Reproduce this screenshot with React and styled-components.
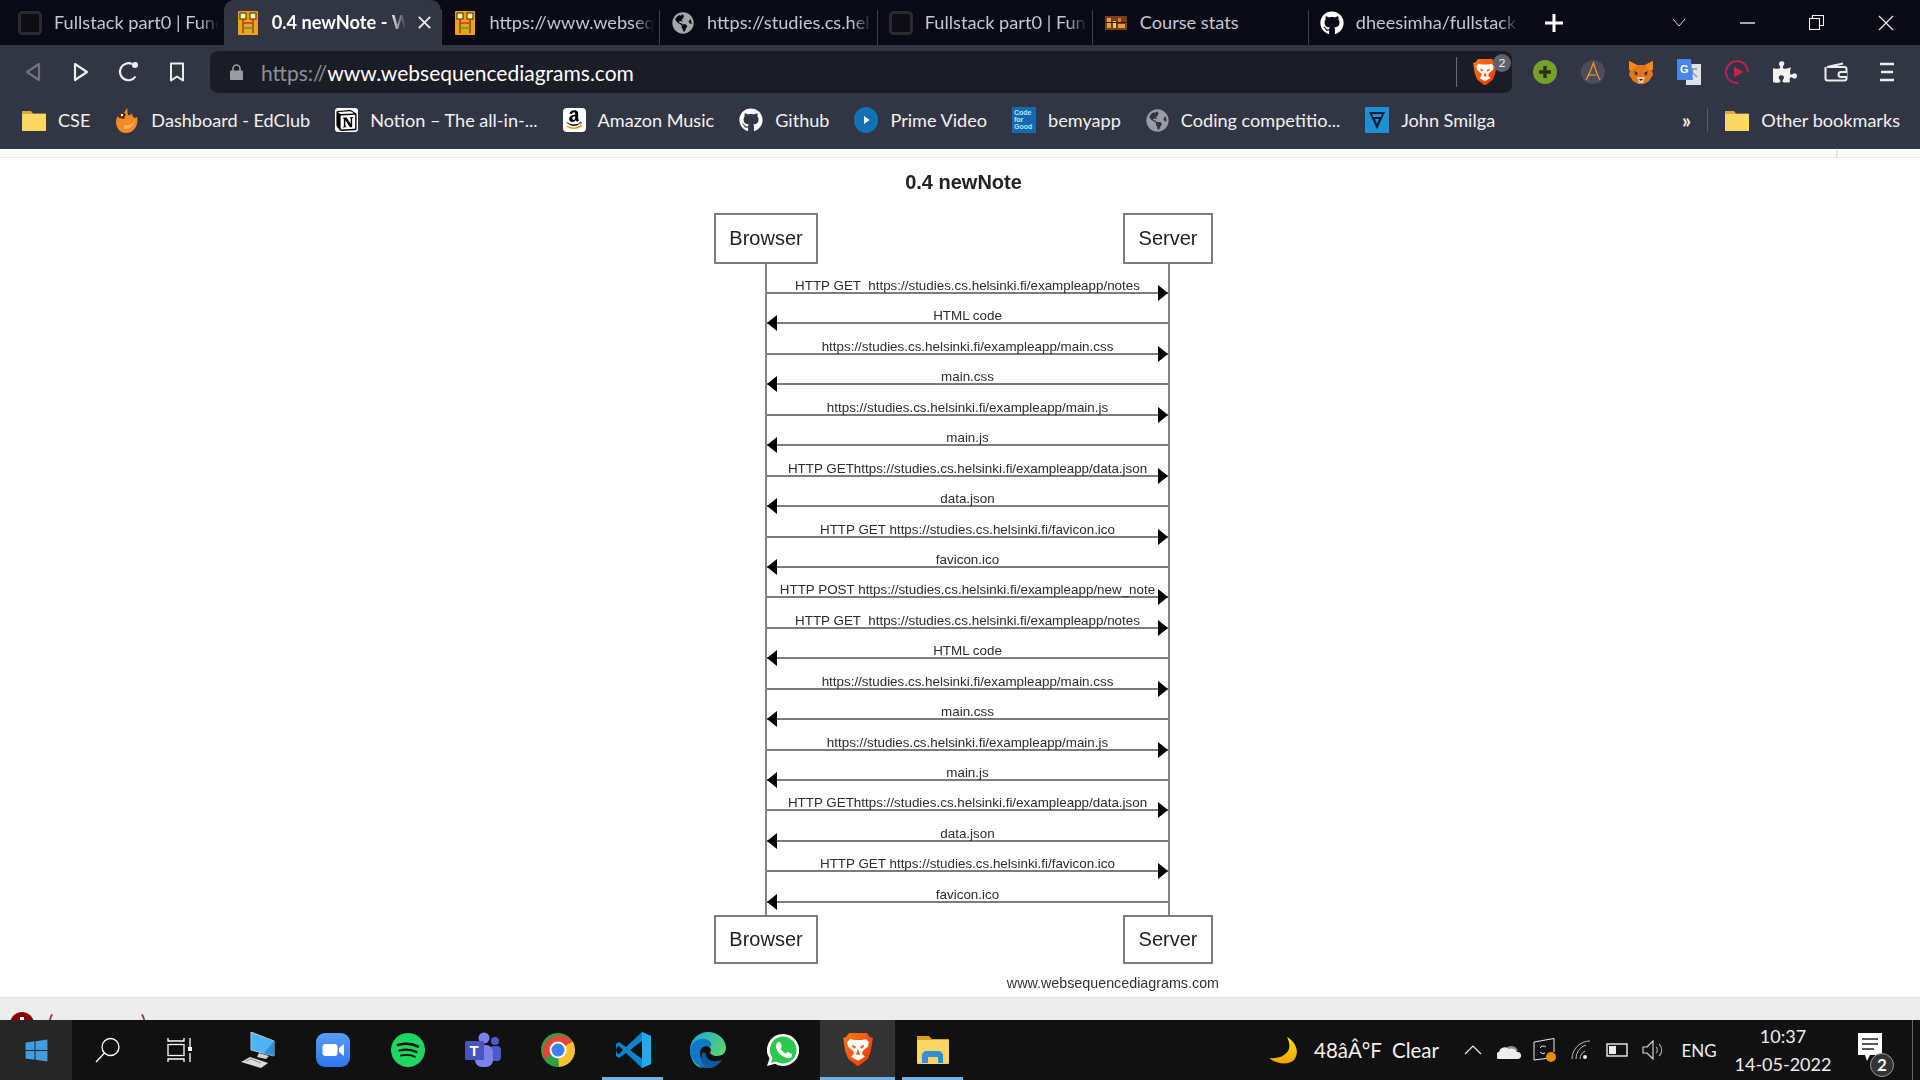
// React
import React from "react";
// Styled Component
import styled, { createGlobalStyle } from "styled-components";
// React Icon
import {
  FaGithub,
  FaGlobeAmericas,
  FaAmazon,
  FaWindows,
  FaPuzzlePiece,
} from "react-icons/fa";
import { SiNotion } from "react-icons/si";

const BASE = "https://studies.cs.helsinki.fi/exampleapp";

// One page load, the second round repeats it after the POST
const pageLoad = (first) => [
  [first, "right"],
  ["HTML code", "left"],
  [`${BASE}/main.css`, "right"],
  ["main.css", "left"],
  [`${BASE}/main.js`, "right"],
  ["main.js", "left"],
  [`HTTP GET${BASE}/data.json`, "right"],
  ["data.json", "left"],
  ["HTTP GET https://studies.cs.helsinki.fi/favicon.ico", "right"],
  ["favicon.ico", "left"],
];

const messages = [
  ...pageLoad(`HTTP GET  ${BASE}/notes`),
  [`HTTP POST ${BASE}/new_note`, "right"],
  ...pageLoad(`HTTP GET  ${BASE}/notes`),
];

// Favicons
const DarkFavicon = () => (
  <svg width="24" height="24" viewBox="0 0 24 24">
    <rect x="1.5" y="1.5" width="21" height="21" rx="3" fill="#0d0d14" stroke="#2b2b2f" strokeWidth="3" />
  </svg>
);

const WsdFavicon = () => (
  <svg width="20" height="24" viewBox="0 0 20 24">
    <rect width="20" height="24" rx="1" fill="#f0a11c" />
    <rect x="2" y="2" width="6" height="6" fill="#fdf0a0" stroke="#3a2a10" />
    <rect x="12" y="2" width="6" height="6" fill="#fdf0a0" stroke="#3a2a10" />
    <path d="M5 8v14M15 8v14" stroke="#7a4a10" strokeWidth="1.4" />
    <path d="M5 12h10" stroke="#d9342b" strokeWidth="1.6" />
    <path d="M5 17h10" stroke="#3fa648" strokeWidth="1.6" />
  </svg>
);

const StatsFavicon = () => (
  <svg width="22" height="14" viewBox="0 0 22 14">
    <rect width="22" height="14" fill="#7a3d16" />
    <rect x="2" y="2" width="4" height="10" fill="#e2a03c" />
    <rect x="8" y="5" width="3" height="7" fill="#f2c25c" />
    <rect x="13" y="2" width="3" height="4" fill="#e2703c" />
    <rect x="13" y="8" width="7" height="4" fill="#e2a03c" />
    <rect x="0" y="6" width="22" height="1" fill="#2b1508" />
  </svg>
);

const Folder = () => (
  <svg width="24" height="24" viewBox="0 0 24 24">
    <path d="M0 3h9l2 2.500h13V23H0z" fill="#d9a93a" />
    <rect y="6" width="24" height="17" rx="1" fill="#fbd863" />
  </svg>
);

const EdClub = () => (
  <svg width="24" height="26" viewBox="0 0 24 26">
    <path d="M1 15C1 10 4 8 7 7l2-1 3-5c1 3 0 5 1 7 2 1 3-1 4-2 0 3 1 4 3 5l2-1c2 8-3 16-11 16C5 26 1 21 1 15z" fill="#f38a24" />
    <path d="M9 22c5 1 10-3 11-9-2 4-6 6-11 5z" fill="#fbb05a" />
    <path d="M2 7l5-2 4 2-2 5-5-1z" fill="#4a3222" />
    <circle cx="7" cy="8" r="1.200" fill="#fff" />
  </svg>
);

const NotionTile = styled.span`
  width: 23px;
  height: 24px;
  background: #fff;
  color: #000;
  display: flex;
  align-items: center;
  justify-content: center;
  border-radius: 3px;
  font-size: 21px;
`;

const AmazonTile = styled(NotionTile)`
  position: relative;
  border-radius: 4px;
  font-size: 18px;
  align-items: flex-start;
  padding-top: 1px;
`;

const AmazonSmile = styled.svg`
  position: absolute;
  left: 4px;
  bottom: 2px;
`;

const Prime = () => (
  <svg width="24" height="26" viewBox="0 0 24 26">
    <ellipse cx="12" cy="13" rx="12" ry="13" fill="#1173b4" />
    <path d="M10 9l5.500 4-5.500 4z" fill="#fff" />
  </svg>
);

const CodeForGood = () => (
  <svg width="24" height="26" viewBox="0 0 24 26">
    <rect width="24" height="26" fill="#0f6cb3" />
    <text x="2" y="8" fontSize="7" fontWeight="700" fill="#bfe0f5" fontFamily="Liberation Sans">Code</text>
    <text x="2" y="15" fontSize="7" fontWeight="700" fill="#bfe0f5" fontFamily="Liberation Sans">for</text>
    <text x="2" y="22" fontSize="7" fontWeight="700" fill="#bfe0f5" fontFamily="Liberation Sans">Good</text>
  </svg>
);

const SmilgaLogo = () => (
  <svg width="24" height="26" viewBox="0 0 24 26">
    <rect width="24" height="26" fill="#1f8fd6" />
    <path d="M4 5h16l-8 17z" fill="#0b1a2b" />
    <path d="M7 7h10l-1 3H8zM10 12h4l-2 5z" fill="#1f8fd6" />
  </svg>
);

// Brave lion, toolbar and taskbar use the same drawing
const BraveLogo = ({ size = 30 }) => (
  <svg width={size} height={size * 1.12} viewBox="0 0 30 34">
    <defs>
      <linearGradient id="braveFill" x1="0" y1="0" x2="1" y2="1">
        <stop offset="0" stopColor="#ff7a1a" />
        <stop offset="1" stopColor="#f52f00" />
      </linearGradient>
    </defs>
    <path d="M6 0h18l3 4 3 1-2 13-3 8-10 8-10-8-3-8L0 5l3-1z" fill="url(#braveFill)" />
    <path d="M7 6l4 1h8l4-1 3 3-1 5-5 4-1 3 3 3-7 4-7-4 3-3-1-3-5-4-1-5z" fill="#fff" />
    <path d="M9 12l4 2-1 2-3-2zM21 12l-4 2 1 2 3-2zM15 16l-2 6h4z" fill="#f25a12" />
  </svg>
);

// Toolbar icons
const BackIcon = ({ dim }) => (
  <svg width="16" height="20" viewBox="0 0 16 20" fill="none" stroke={dim ? "#70737f" : "#eee"} strokeWidth="2.200" strokeLinejoin="round">
    {dim ? <path d="M14 2L2 10l12 8z" /> : <path d="M2 2l12 8-12 8z" />}
  </svg>
);

const ReloadIcon = () => (
  <svg width="22" height="22" viewBox="0 0 22 22" fill="none">
    <path d="M17.500 15.500A8.500 8.500 0 1 1 14 3" stroke="#eee" strokeWidth="2.200" />
    <circle cx="17" cy="4" r="3" fill="#eee" />
  </svg>
);

const BookmarkIcon = () => (
  <svg width="16" height="20" viewBox="0 0 16 20" fill="none" stroke="#eee" strokeWidth="2" strokeLinejoin="round">
    <path d="M2 1.500h12v17l-6-4-6 4z" />
  </svg>
);

const LockIcon = () => (
  <svg width="13" height="16" viewBox="0 0 13 16">
    <path d="M3 7V4.500a3.500 3.500 0 0 1 7 0V7" fill="none" stroke="#9a9ca4" strokeWidth="1.600" />
    <rect y="6.500" width="13" height="9.500" rx="1" fill="#9a9ca4" />
  </svg>
);

const AddonGreen = () => (
  <svg width="24" height="24" viewBox="0 0 24 24">
    <circle cx="12" cy="12" r="12" fill="#76a02b" />
    <path d="M12 6v12M6 12h12" stroke="#26331a" strokeWidth="3.400" />
  </svg>
);

const AddonArc = () => (
  <svg width="24" height="24" viewBox="0 0 24 24" fill="none">
    <circle cx="12" cy="12" r="12" fill="#4a4c59" />
    <path d="M5 20C8 15 11 7 12.500 3 14 8 16 15 19 20" stroke="#f08a24" strokeWidth="1.500" />
    <path d="M7 15h8" stroke="#e8b13c" strokeWidth="1" />
  </svg>
);

const AddonFox = () => (
  <svg width="26" height="24" viewBox="0 0 26 24">
    <path d="M1 1l8 4h8l8-4-1 9 1 5-4 6-5 3h-6l-5-3-4-6 1-5z" fill="#e2761b" />
    <path d="M6 11l4 2-2 3zM20 11l-4 2 2 3z" fill="#3a2a20" />
    <path d="M9 17h8l-2 6h-4z" fill="#e4c8a8" />
    <path d="M11 19h4l-2 2z" fill="#222" />
    <path d="M1 1l8 4-3 5-5 0zM25 1l-8 4 3 5 5 0z" fill="#f6851b" />
  </svg>
);

const AddonTranslate = () => (
  <svg width="24" height="26" viewBox="0 0 24 26">
    <rect x="9" y="5" width="15" height="21" fill="#dfe3e8" />
    <path d="M13 10h7M16 10l-2 8M15 13l5 5" stroke="#8a9199" strokeWidth="1.300" fill="none" />
    <path d="M0 0h14l2 21H0z" fill="#4a86e8" />
    <text x="3" y="14" fontSize="11" fontWeight="700" fill="#fff" fontFamily="Liberation Sans">G</text>
  </svg>
);

const AddonPlay = () => (
  <svg width="24" height="24" viewBox="0 0 24 24" fill="none">
    <path d="M13 23A11 11 0 1 1 23 12" stroke="#d11d4f" strokeWidth="1.800" />
    <path d="M9 6.500L18 12l-9 5.500z" fill="#d11d4f" />
  </svg>
);

const WalletIcon = () => (
  <svg width="24" height="20" viewBox="0 0 24 20" fill="none" stroke="#eee" strokeWidth="2">
    <path d="M3 5l16-3.500M1.500 5v11.500a2 2 0 0 0 2 2h17a2 2 0 0 0 2-2V7a2 2 0 0 0-2-2H4" />
    <path d="M23 10h-6a2 2 0 0 0 0 5h6" fill="#323544" />
  </svg>
);

const MenuIcon = () => (
  <svg width="14" height="20" viewBox="0 0 14 20">
    <path d="M0 2h14M1 10h12M0 18h14" stroke="#eee" strokeWidth="2.400" />
  </svg>
);

// Window controls
const PlusIcon = () => (
  <svg width="18" height="18" viewBox="0 0 18 18">
    <path d="M9 0v18M0 9h18" stroke="#fff" strokeWidth="3" />
  </svg>
);

const ChevronIcon = () => (
  <svg width="14" height="9" viewBox="0 0 14 9" fill="none">
    <path d="M1 1l6 7 6-7" stroke="#ddd" />
  </svg>
);

const MinimizeIcon = () => (
  <svg width="15" height="2" viewBox="0 0 15 2">
    <path d="M0 1h15" stroke="#eee" strokeWidth="1.400" />
  </svg>
);

const RestoreIcon = () => (
  <svg width="15" height="15" viewBox="0 0 15 15" fill="none" stroke="#eee" strokeWidth="1.100">
    <rect x="0.500" y="3.500" width="10" height="11" />
    <path d="M3.500 3.500V0.500h11v10h-4" />
  </svg>
);

const CloseIcon = ({ size = 16, width = 1.200 }) => (
  <svg width={size} height={size} viewBox="0 0 16 16">
    <path d="M1 1l14 14M15 1L1 15" stroke="#eee" strokeWidth={width} />
  </svg>
);

// Taskbar icons
const SearchIcon = () => (
  <svg width="26" height="26" viewBox="0 0 26 26" fill="none" stroke="#fff" strokeWidth="1.300">
    <circle cx="15.500" cy="10" r="8.500" />
    <path d="M9.500 16L1 25" />
  </svg>
);

const TaskViewIcon = () => (
  <svg width="26" height="24" viewBox="0 0 26 24" fill="none" stroke="#fff" strokeWidth="1.300">
    <path d="M1 0v3h16V0M1 24v-3h16v3" />
    <rect x="1" y="6.500" width="16" height="11" />
    <path d="M23 0v9M23 15v9" />
    <rect x="21" y="9" width="4" height="4" fill="#fff" stroke="none" />
  </svg>
);

const ThisPcIcon = () => (
  <svg width="34" height="36" viewBox="0 0 34 36">
    <path d="M10 0l23 9v15L10 18z" fill="#4db4f7" stroke="#b8c4cc" />
    <path d="M33 9v15l-10-3z" fill="#2e8fd6" />
    <path d="M18 21l10 3-3 3-9-2z" fill="#cfd3d6" />
    <path d="M0 30l9-5 18 6-7 5z" fill="#d8dadc" />
    <path d="M5 29l5-2 10 4" stroke="#8a8d90" fill="none" />
  </svg>
);

const ZoomIcon = () => (
  <svg width="34" height="34" viewBox="0 0 34 34">
    <defs>
      <linearGradient id="zoomFill" x1="0" y1="0" x2="0" y2="1">
        <stop offset="0" stopColor="#5a9bfa" />
        <stop offset="1" stopColor="#2d78f0" />
      </linearGradient>
    </defs>
    <rect width="34" height="34" rx="9" fill="url(#zoomFill)" />
    <rect x="6.500" y="11" width="15" height="12" rx="3" fill="#fff" />
    <path d="M23 15l5-4v12l-5-4z" fill="#fff" />
  </svg>
);

const SpotifyIcon = () => (
  <svg width="34" height="34" viewBox="0 0 34 34" fill="none" stroke="#111" strokeLinecap="round">
    <circle cx="17" cy="17" r="17" fill="#1ed760" stroke="none" />
    <path d="M7 12c7-2 14-1.500 20 1.500" strokeWidth="2.600" />
    <path d="M8.500 17.500c6-1.500 12-1 17 1.500" strokeWidth="2.200" />
    <path d="M10 22.500c5-1 10-.8 14 1.200" strokeWidth="1.800" />
  </svg>
);

const TeamsIcon = () => (
  <svg width="36" height="36" viewBox="0 0 36 36">
    <circle cx="30" cy="9" r="4" fill="#5059c9" />
    <rect x="25" y="14" width="11" height="15" rx="4" fill="#5059c9" />
    <circle cx="19" cy="6" r="5.500" fill="#7b83eb" />
    <rect x="10" y="13" width="18" height="22" rx="7" fill="#7b83eb" />
    <rect y="9" width="19" height="19" rx="1.500" fill="#4b53bc" />
    <text x="4.500" y="24" fontSize="15" fontWeight="700" fill="#fff" fontFamily="Liberation Sans">T</text>
  </svg>
);

const ChromeIcon = () => (
  <svg width="34" height="34" viewBox="0 0 34 34">
    <circle cx="17" cy="17" r="17" fill="#2f9e44" />
    <path d="M17 17L3 26A17 17 0 0 1 31.700 8.500z" fill="#e8443a" />
    <path d="M17 17L31.700 8.500A17 17 0 0 1 18 34z" fill="#fbc02d" />
    <circle cx="17" cy="17" r="8.500" fill="#fff" />
    <circle cx="17" cy="17" r="6.500" fill="#3b82e8" />
  </svg>
);

const VsCodeIcon = () => (
  <svg width="36" height="36" viewBox="0 0 36 36">
    <path d="M27 0l9 4v28l-9 4L11 21 4 26l-3-2v-12l3-2 7 5z" fill="#0a84cc" />
    <path d="M27 0l9 4v28l-9 4z" fill="#24a8f0" />
    <path d="M27 9L15 18l12 9z" fill="#111" />
    <path d="M4 14l4 4-4 4-2-1-1-3 1-3z" fill="#111" />
  </svg>
);

const EdgeIcon = () => (
  <svg width="36" height="36" viewBox="0 0 36 36">
    <defs>
      <linearGradient id="edgeTop" x1="0" y1="0" x2="1" y2="0.700">
        <stop offset="0" stopColor="#1aa6dc" />
        <stop offset="1" stopColor="#62d964" />
      </linearGradient>
    </defs>
    <path d="M18 0c10 0 18 7 18 16 0 5-4 8-9 8-4 0-7-2-7-4 2-1 1-6-4-6-8 0-12 7-10 14 1 4 4 7 7 8C6 36 0 28 0 18 0 8 8 0 18 0z" fill="url(#edgeTop)" />
    <path d="M0 18C1 10 8 6 15 7c6 1 8 5 5 8-5-3-11 1-10 8 1 6 7 11 14 12-2 .7-4 1-6 1C8 36 0 28 0 18z" fill="#0f78c8" />
    <path d="M16 22c0 5 5 8 11 7l5-1c-3 5-8 8-14 8-5-1-8-8-6-14 1-2 3-2 4 0z" fill="#0d5aa0" />
  </svg>
);

const WhatsAppIcon = () => (
  <svg width="32" height="32" viewBox="0 0 32 32">
    <path d="M16 0a16 16 0 1 1-8 29.800L0 32l2.500-7.500A16 16 0 0 1 16 0z" fill="#fff" />
    <path d="M16 2.500a13.500 13.500 0 1 1-7 25L4 29l1.500-5A13.500 13.500 0 0 1 16 2.500z" fill="#2cc84d" />
    <path d="M11 8l2 0 2 4.500-1.500 2c1 2 3 4 5 5l2-1.500 4.500 2v2c-1 2-3 2.500-5 2-6-1.500-10-6-11-11 0-2 .5-4 2-5z" fill="#fff" />
  </svg>
);

const ExplorerIcon = () => (
  <svg width="32" height="28" viewBox="0 0 32 28">
    <path d="M0 0h12l3 3h17v24H0z" fill="#d99f1f" />
    <rect y="4" width="32" height="24" rx="1" fill="#fbd568" />
    <path d="M5 27V18l3-3h15l3 3v9h-5v-6H11v6z" fill="#2f8fd8" />
  </svg>
);

// Tray icons
const MoonIcon = () => (
  <svg width="29" height="27" viewBox="0 0 29 27">
    <defs>
      <linearGradient id="moonFill" x1="0" y1="0" x2="0" y2="1">
        <stop offset="0" stopColor="#ffe11a" />
        <stop offset="1" stopColor="#f0a400" />
      </linearGradient>
    </defs>
    <path d="M18 0c9 5 13 15 7 23-5 5-16 5-25-2 9 1 17-2 20-9 1-4 0-8-2-12z" fill="url(#moonFill)" />
  </svg>
);

const CaretIcon = () => (
  <svg width="18" height="10" viewBox="0 0 18 10" fill="none">
    <path d="M1 9l8-8 8 8" stroke="#eee" strokeWidth="1.200" />
  </svg>
);

const CloudIcon = () => (
  <svg width="24" height="17" viewBox="0 0 24 17">
    <path d="M8 8a7 7 0 0 1 13 1z" fill="#8d8d8d" />
    <path d="M3 17a3 3 0 0 1-1-7 6 6 0 0 1 10-3 6 6 0 0 1 8 3 3.500 3.500 0 0 1 1 7z" fill="#eee" />
  </svg>
);

const SyncIcon = () => (
  <svg width="24" height="24" viewBox="0 0 24 24" fill="none" stroke="#eee">
    <path d="M1 4v18l16-2M1 4l20-3.500V14" />
    <path d="M7 10a4 4 0 0 1 6-1M12 15a4 4 0 0 1-5-1" />
    <circle cx="18" cy="19" r="5" fill="#f08a00" stroke="none" />
  </svg>
);

const WifiIcon = () => (
  <svg width="20" height="20" viewBox="0 0 20 20" fill="none" stroke="#bbb">
    <path d="M1 19A18 18 0 0 1 19 1M5 19A14 14 0 0 1 15 5M9 19a10 10 0 0 1 5-8" />
    <circle cx="14" cy="17" r="2" fill="#eee" stroke="none" />
  </svg>
);

const BatteryIcon = () => (
  <svg width="22" height="14" viewBox="0 0 22 14">
    <rect x="1" y="1" width="20" height="12" fill="none" stroke="#eee" strokeWidth="1.400" />
    <rect x="3" y="3" width="7" height="8" fill="#eee" />
  </svg>
);

const VolumeIcon = () => (
  <svg width="22" height="20" viewBox="0 0 22 20" fill="none" stroke="#ddd" strokeWidth="1.100">
    <path d="M1 7h4l6-6v18l-6-6H1z" />
    <path d="M14 7a4 4 0 0 1 0 6M17 4a8 8 0 0 1 0 12" stroke="#aaa" />
  </svg>
);

const NoteIcon = () => (
  <svg width="24" height="28" viewBox="0 0 24 28">
    <path d="M0 0h24v22H12l-3 6-2-6H0z" fill="#fff" />
    <path d="M4 6h16M4 11h16M4 16h12" stroke="#222" strokeWidth="1.400" />
  </svg>
);

const bookmarks = [
  { label: "CSE", icon: <Folder /> },
  { label: "Dashboard - EdClub", icon: <EdClub /> },
  { label: "Notion – The all-in-...", icon: <NotionTile><SiNotion /></NotionTile> },
  {
    label: "Amazon Music",
    icon: (
      <AmazonTile>
        <FaAmazon />
        <AmazonSmile width="15" height="5" viewBox="0 0 15 5" fill="none">
          <path d="M0 1c4 3 9 3 15 0" stroke="#f09a1a" strokeWidth="1.500" />
        </AmazonSmile>
      </AmazonTile>
    ),
  },
  { label: "Github", icon: <FaGithub size={24} color="#fff" /> },
  { label: "Prime Video", icon: <Prime /> },
  { label: "bemyapp", icon: <CodeForGood /> },
  { label: "Coding competitio...", icon: <FaGlobeAmericas size={23} color="#9a9ca4" /> },
  { label: "John Smilga", icon: <SmilgaLogo /> },
];

const tabs = [
  { title: "Fullstack part0 | Func", icon: <DarkFavicon />, width: 217.7 },
  { title: "0.4 newNote - W", icon: <WsdFavicon />, width: 217.7, active: true },
  { title: "https://www.webseq", icon: <WsdFavicon />, width: 217.7 },
  { title: "https://studies.cs.hel", icon: <FaGlobeAmericas size={22} color="#a5a7ad" />, width: 217.7 },
  { title: "Fullstack part0 | Func", icon: <DarkFavicon />, width: 215 },
  { title: "Course stats", icon: <StatsFavicon />, width: 216, plain: true },
  { title: "dheesimha/fullstack-", icon: <FaGithub size={24} color="#fff" />, width: 216 },
];

const extensions = [
  { id: "green", icon: <AddonGreen /> },
  { id: "arc", icon: <AddonArc /> },
  { id: "fox", icon: <AddonFox /> },
  { id: "translate", icon: <AddonTranslate /> },
  { id: "play", icon: <AddonPlay /> },
  { id: "puzzle", icon: <FaPuzzlePiece size={24} color="#f2f2f2" /> },
  { id: "wallet", icon: <WalletIcon />, nudge: 3 },
  { id: "menu", icon: <MenuIcon />, nudge: 3 },
];

const pinnedApps = [
  { id: "pc", icon: <ThisPcIcon /> },
  { id: "zoom", icon: <ZoomIcon /> },
  { id: "spotify", icon: <SpotifyIcon /> },
  { id: "teams", icon: <TeamsIcon /> },
  { id: "chrome", icon: <ChromeIcon /> },
  { id: "vscode", icon: <VsCodeIcon />, running: true },
  { id: "edge", icon: <EdgeIcon /> },
  { id: "whatsapp", icon: <WhatsAppIcon /> },
  { id: "brave", icon: <BraveLogo size={30} />, running: true, active: true },
  { id: "explorer", icon: <ExplorerIcon />, running: true },
];

const trayIcons = [
  <CaretIcon key="caret" />,
  <CloudIcon key="cloud" />,
  <SyncIcon key="sync" />,
  <WifiIcon key="wifi" />,
  <BatteryIcon key="battery" />,
  <VolumeIcon key="volume" />,
];

const App = () => {
  return (
    <Screen>
      <GlobalStyle />
      <TabStrip>
        <TabList>
          {tabs.map((tab, i) => (
            <Tab key={i} $width={tab.width} $active={tab.active} $noLine={i === 0 || tab.active}>
              <TabIcon>{tab.icon}</TabIcon>
              <TabTitle $active={tab.active} $plain={tab.plain}>{tab.title}</TabTitle>
              {tab.active && <CloseIcon size={13} width={2.200} />}
            </Tab>
          ))}
        </TabList>
        <NewTab><PlusIcon /></NewTab>
        <WindowControls>
          <WindowButton><ChevronIcon /></WindowButton>
          <WindowButton><MinimizeIcon /></WindowButton>
          <WindowButton><RestoreIcon /></WindowButton>
          <WindowButton><CloseIcon /></WindowButton>
        </WindowControls>
      </TabStrip>

      <Toolbar>
        <NavButton><BackIcon dim /></NavButton>
        <NavButton><BackIcon /></NavButton>
        <NavButton><ReloadIcon /></NavButton>
        <NavButton><BookmarkIcon /></NavButton>
        <UrlBar>
          <LockIcon />
          <UrlText>
            <UrlScheme>https://</UrlScheme>www.websequencediagrams.com
          </UrlText>
          <ShieldGroup>
            <BraveLogo size={24} />
            <ShieldBadge>2</ShieldBadge>
          </ShieldGroup>
        </UrlBar>
        <Extensions>
          {extensions.map((ext) => (
            <NavButton key={ext.id} $nudge={ext.nudge}>{ext.icon}</NavButton>
          ))}
        </Extensions>
      </Toolbar>

      <BookmarkBar>
        {bookmarks.map((mark) => (
          <Bookmark key={mark.label}>
            {mark.icon}
            <span>{mark.label}</span>
          </Bookmark>
        ))}
        <MoreBookmarks>»</MoreBookmarks>
        <OtherBookmarks>
          <Folder />
          <span>Other bookmarks</span>
        </OtherBookmarks>
      </BookmarkBar>

      <Page>
        <Diagram>
          <DiagramTitle>0.4 newNote</DiagramTitle>
          <ActorRow>
            <Actor $width={104}>Browser</Actor>
            <Actor $width={90}>Server</Actor>
          </ActorRow>
          <Lifelines>
            {messages.map(([text, dir], i) => (
              <Message key={i}>
                <MessageLabel>{text}</MessageLabel>
                <ArrowHead $dir={dir} />
              </Message>
            ))}
          </Lifelines>
          <ActorRow>
            <Actor $width={104} $short>Browser</Actor>
            <Actor $width={90} $short>Server</Actor>
          </ActorRow>
          <Credit>www.websequencediagrams.com</Credit>
        </Diagram>
      </Page>

      <ConsoleStrip>
        <ErrorDot />
        <ErrorText>
          <span>(</span>
          <span>)</span>
        </ErrorText>
      </ConsoleStrip>

      <Taskbar>
        <StartButton><FaWindows size={25} color="#3f9de0" /></StartButton>
        <ShellButton><SearchIcon /></ShellButton>
        <ShellButton><TaskViewIcon /></ShellButton>
        <PinnedApps>
          {pinnedApps.map((app) => (
            <AppButton key={app.id} $running={app.running} $active={app.active}>
              {app.icon}
            </AppButton>
          ))}
        </PinnedApps>
        <Tray>
          <Weather>
            <MoonIcon />
            <WeatherText>48âÂ°F&nbsp; Clear</WeatherText>
          </Weather>
          {trayIcons.map((icon) => (
            <TraySlot key={icon.key}>{icon}</TraySlot>
          ))}
          <Language>ENG</Language>
          <Clock>
            <span>10:37</span>
            <span>14-05-2022</span>
          </Clock>
          <Notifications>
            <NoteIcon />
            <NoteBadge>2</NoteBadge>
          </Notifications>
          <ShowDesktop />
        </Tray>
      </Taskbar>
    </Screen>
  );
};

export default App;

const GlobalStyle = createGlobalStyle`
  html, body {
    margin: 0;
    height: 100%;
    overflow: hidden;
  }
  * {
    box-sizing: border-box;
  }
`;

const Screen = styled.div`
  width: 1920px;
  height: 1080px;
  display: flex;
  flex-direction: column;
  background: #fff;
  font-family: "Lato", "Noto Sans", sans-serif;
`;

const TabStrip = styled.div`
  height: 45px;
  flex: none;
  display: flex;
  background: #0a0a16;
`;

const TabList = styled.div`
  display: flex;
  padding-left: 6px;
`;

const Tab = styled.div`
  position: relative;
  width: ${(props) => props.$width}px;
  height: 45px;
  display: flex;
  align-items: center;
  gap: 12px;
  padding: 0 ${(props) => (props.$active ? "10px" : "5px")} 0 12px;
  background: ${(props) => (props.$active ? "#323544" : "transparent")};
  border-radius: ${(props) => (props.$active ? "10px 10px 0 0" : "0")};

  &::before {
    content: "";
    display: ${(props) => (props.$noLine ? "none" : "block")};
    position: absolute;
    left: 0;
    top: 10px;
    bottom: 0;
    width: 1px;
    background: #3c3e4c;
  }
`;

const TabIcon = styled.span`
  width: 24px;
  height: 24px;
  flex: none;
  display: flex;
  align-items: center;
  justify-content: center;
`;

const TabTitle = styled.span`
  flex: 1;
  overflow: hidden;
  white-space: nowrap;
  padding-bottom: 2px;
  font-size: 18.2px;
  font-weight: ${(props) => (props.$active ? 700 : 400)};
  color: ${(props) => (props.$active ? "#fff" : "#c4c7cd")};
  mask-image: ${(props) =>
    props.$plain
      ? "none"
      : "linear-gradient(to right, #000 88%, transparent 100%)"};
`;

const NewTab = styled.div`
  width: 60px;
  display: flex;
  align-items: center;
  justify-content: center;
`;

const WindowControls = styled.div`
  margin-left: auto;
  display: flex;
`;

const WindowButton = styled.div`
  width: 69px;
  display: flex;
  align-items: center;
  justify-content: center;
`;

const Toolbar = styled.div`
  height: 54px;
  flex: none;
  display: flex;
  align-items: center;
  padding-left: 9px;
  background: #323544;
`;

const NavButton = styled.div`
  width: 48px;
  height: 48px;
  flex: none;
  margin-left: ${(props) => props.$nudge || 0}px;
  display: flex;
  align-items: center;
  justify-content: center;
`;

const UrlBar = styled.div`
  flex: 0 0 1302px;
  height: 42px;
  margin-left: 9px;
  display: flex;
  align-items: center;
  gap: 18px;
  padding-left: 20px;
  border-radius: 8px;
  background: #1a1c26;
`;

const UrlText = styled.div`
  font-size: 21px;
  color: #fff;
`;

const UrlScheme = styled.span`
  color: #8d9099;
`;

const ShieldGroup = styled.div`
  position: relative;
  margin-left: auto;
  width: 56px;
  height: 30px;
  display: flex;
  align-items: center;
  padding-left: 16px;
  border-left: 1px solid #6a6c76;
`;

const ShieldBadge = styled.span`
  position: absolute;
  left: 36px;
  top: -3px;
  width: 18px;
  height: 18px;
  border-radius: 50%;
  background: #5f616d;
  color: #eee;
  font-size: 12px;
  text-align: center;
  line-height: 18px;
`;

const Extensions = styled.div`
  display: flex;
  margin-left: 9px;
`;

const BookmarkBar = styled.div`
  height: 50px;
  flex: none;
  display: flex;
  align-items: center;
  gap: 25px;
  padding: 0 20px 8px 22px;
  background: #323544;
`;

const Bookmark = styled.div`
  display: flex;
  align-items: center;
  gap: 12px;
  font-size: 18.1px;
  color: #f2f2f2;
  white-space: nowrap;
`;

const MoreBookmarks = styled.span`
  margin-left: auto;
  font-size: 20px;
  font-weight: 700;
  color: #eee;
`;

const OtherBookmarks = styled(Bookmark)`
  padding-left: 17px;
  margin-left: -9px;
  border-left: 1px solid #55576a;
`;

const Page = styled.div`
  position: relative;
  flex: 1;
  min-height: 0;
  margin-top: 8px;
  padding-left: 714px;
  border-top: 1px solid #e8e8e8;

  &::before {
    content: "";
    position: absolute;
    left: 1836px;
    top: -8px;
    width: 2px;
    height: 7px;
    background: #e4e4e4;
  }
`;

const Diagram = styled.div`
  width: 505px;
  display: flex;
  flex-direction: column;
  font-family: "Liberation Sans", Arial, sans-serif;
  filter: blur(0.6px);
`;

const DiagramTitle = styled.div`
  width: 499px;
  margin: 12px 0 19px;
  text-align: center;
  font-size: 20px;
  line-height: 24px;
  font-weight: 700;
  color: #222;
`;

const ActorRow = styled.div`
  width: 499px;
  display: flex;
  justify-content: space-between;
`;

const Actor = styled.div`
  width: ${(props) => props.$width}px;
  height: ${(props) => (props.$short ? 49 : 51)}px;
  display: flex;
  align-items: center;
  justify-content: center;
  border: 2px solid #7c7c7c;
  font-size: 20px;
  color: #222;
`;

const Lifelines = styled.div`
  width: 405px;
  margin-left: 51px;
  padding-bottom: 12px;
  border-left: 2px solid #848484;
  border-right: 2px solid #848484;
`;

const Message = styled.div`
  position: relative;
  height: 30.45px;
  display: flex;
  justify-content: center;
  align-items: flex-end;
  border-bottom: 2px solid #7c7c7c;

  &:first-child {
    height: 30px;
  }
`;

const MessageLabel = styled.div`
  font-size: 13.4px;
  line-height: 15px;
  margin-bottom: -1px;
  color: #2c2c2c;
  white-space: pre;
`;

const ArrowHead = styled.span`
  position: absolute;
  bottom: -9px;
  ${(props) => (props.$dir === "right" ? "right: 0;" : "left: 0;")}
  width: 0;
  height: 0;
  border-top: 8px solid transparent;
  border-bottom: 8px solid transparent;
  ${(props) =>
    props.$dir === "right"
      ? "border-left: 10px solid #000;"
      : "border-right: 10px solid #000;"}
`;

const Credit = styled.div`
  margin-top: 10px;
  text-align: right;
  font-size: 14.3px;
  line-height: 18px;
  color: #333;
`;

const ConsoleStrip = styled.div`
  height: 23px;
  flex: none;
  display: flex;
  gap: 14px;
  padding: 14px 0 0 10px;
  overflow: hidden;
  background: #ededed;
  border-top: 1px solid #e3e3e3;
`;

const ErrorDot = styled.span`
  width: 24px;
  height: 24px;
  flex: none;
  border-radius: 50%;
  background: #8b0000;
  position: relative;

  &::after {
    content: "";
    position: absolute;
    left: 10px;
    top: 5px;
    width: 4px;
    height: 12px;
    background: #fff;
  }
`;

const ErrorText = styled.div`
  width: 98px;
  display: flex;
  justify-content: space-between;
  margin-top: -3px;
  font-size: 20px;
  line-height: 24px;
  color: #8b1a2a;
`;

const Taskbar = styled.div`
  height: 60px;
  flex: none;
  display: flex;
  background: #111;
`;

const StartButton = styled.div`
  width: 72px;
  display: flex;
  align-items: center;
  justify-content: center;
  background: #262626;
`;

const ShellButton = styled.div`
  width: 72px;
  display: flex;
  align-items: center;
  justify-content: center;
`;

const PinnedApps = styled.div`
  display: flex;
  margin-left: 4px;
`;

const AppButton = styled.div`
  position: relative;
  width: 75px;
  display: flex;
  align-items: center;
  justify-content: center;
  background: ${(props) => (props.$active ? "#333" : "transparent")};

  &::after {
    content: "";
    display: ${(props) => (props.$running ? "block" : "none")};
    position: absolute;
    bottom: 0;
    left: ${(props) => (props.$active ? "0" : "7px")};
    right: ${(props) => (props.$active ? "0" : "7px")};
    height: 3px;
    background: #6cb2e8;
  }
`;

const Tray = styled.div`
  margin-left: auto;
  display: flex;
  align-items: center;
  color: #eee;
`;

const Weather = styled.div`
  width: 186px;
  display: flex;
  align-items: center;
  gap: 16px;
`;

const WeatherText = styled.span`
  font-size: 20.5px;
  color: #f2f2f2;
  white-space: nowrap;
`;

const TraySlot = styled.div`
  width: 36px;
  display: flex;
  align-items: center;
  justify-content: center;
`;

const Language = styled.div`
  width: 56px;
  text-align: center;
  font-size: 17px;
`;

const Clock = styled.div`
  width: 112px;
  display: flex;
  flex-direction: column;
  align-items: center;
  gap: 8px;
  font-size: 18px;
  line-height: 20px;
`;

const Notifications = styled.div`
  position: relative;
  width: 73px;
  height: 60px;
  display: flex;
  align-items: center;
  padding: 0 0 6px 19px;
`;

const NoteBadge = styled.span`
  position: absolute;
  left: 31px;
  top: 33px;
  width: 24px;
  height: 24px;
  border-radius: 50%;
  background: #333;
  border: 1px solid #999;
  color: #fff;
  font-size: 17px;
  font-weight: 700;
  text-align: center;
  line-height: 22px;
`;

const ShowDesktop = styled.div`
  width: 8px;
  height: 60px;
  border-left: 1px solid #666;
`;
